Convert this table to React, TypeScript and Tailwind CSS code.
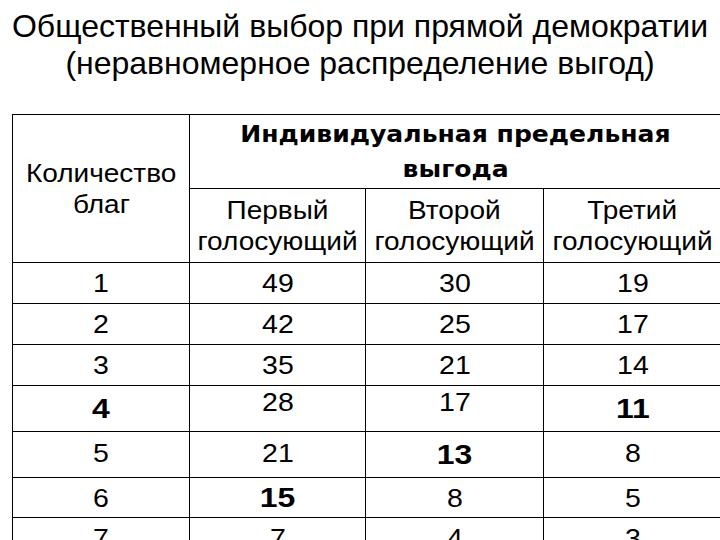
const ROWS: { n: string; v: [string, string, string]; bold: boolean[]; h: string; pad: string }[] = [
  { n: '1', v: ['49', '30', '19'], bold: [false, false, false, false], h: 'h-[41px]', pad: 'items-center' },
  { n: '2', v: ['42', '25', '17'], bold: [false, false, false, false], h: 'h-[41px]', pad: 'items-center' },
  { n: '3', v: ['35', '21', '14'], bold: [false, false, false, false], h: 'h-[41px]', pad: 'items-center' },
  { n: '4', v: ['28', '17', '11'], bold: [true, false, false, true], h: 'h-[46px]', pad: 'items-start pt-[2px]' },
  { n: '5', v: ['21', '13', '8'], bold: [false, false, true, false], h: 'h-[46px]', pad: 'items-start pt-[7px]' },
  { n: '6', v: ['15', '8', '5'], bold: [false, true, false, false], h: 'h-[40px]', pad: 'items-center' },
  { n: '7', v: ['7', '4', '3'], bold: [false, false, false, false], h: 'h-[40px]', pad: 'items-center' },
];

// the table in the slide is stretched a bit wider than its font size
function Cell({ text, bold, pad }: { text: string; bold: boolean; pad: string }) {
  return (
    <div
      className={[
        'flex justify-center border-r border-b border-black',
        bold ? 'items-center text-[28px] font-bold' : `${pad} text-[25px]`,
      ].join(' ')}
    >
      <span className="leading-[28px] scale-x-[1.14]">{text}</span>
    </div>
  );
}

export default function App() {
  return (
    <div className="w-[720px] h-[540px] overflow-hidden bg-white text-black font-['Liberation_Sans',Arial,sans-serif]">
      {/* Title */}
      <div className="h-[114px] pt-[8px] flex flex-col items-center text-[32px] leading-[37px] whitespace-nowrap">
        <div>Общественный выбор при прямой демократии</div>
        <div>(неравномерное распределение выгод)</div>
      </div>

      {/* Table */}
      <div className="ml-[12px] w-[710px] border-l border-t border-black grid grid-cols-[177px_176px_178px_178px]">
        <div className="row-span-2 h-[148px] flex flex-col items-center justify-center text-[25px] leading-[31px] border-r border-b border-black">
          <span className="scale-x-[1.12]">Количество</span>
          <span className="scale-x-[1.12]">благ</span>
        </div>
        <div className="col-span-3 h-[74px] flex flex-col items-center justify-center text-[23px] leading-[35px] font-bold font-['DejaVu_Sans',Verdana,sans-serif] border-r border-b border-black">
          <span className="scale-x-[1.09]">Индивидуальная предельная</span>
          <span className="scale-x-[1.09]">выгода</span>
        </div>
        {['Первый', 'Второй', 'Третий'].map((w) => (
          <div
            key={w}
            className="h-[74px] flex flex-col items-center justify-center text-[25px] leading-[31px] border-r border-b border-black whitespace-nowrap"
          >
            <span className="scale-x-[1.12]">{w}</span>
            <span className="scale-x-[1.12]">голосующий</span>
          </div>
        ))}

        {ROWS.map((r) => (
          <div key={r.n} className="contents">
            {[r.n, ...r.v].map((t, i) => (
              <div key={i} className={`${r.h} grid`}>
                <Cell text={t} bold={r.bold[i]} pad={r.pad} />
              </div>
            ))}
          </div>
        ))}
      </div>
    </div>
  );
}
